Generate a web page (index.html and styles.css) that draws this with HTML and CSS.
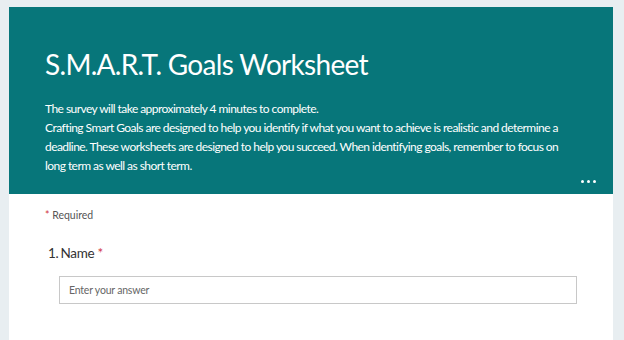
FILE: index.html
```html
<!DOCTYPE html>
<html lang="en">
<head>
    <meta charset="UTF-8" />
    <title>S.M.A.R.T. Goals Worksheet</title>
    <link rel="stylesheet" href="styles.css">
</head>
<body>

<div class="form-card">
    <div class="form-header">
        <h1>S.M.A.R.T. Goals Worksheet</h1>
        <div class="description">
            The survey will take approximately 4 minutes to complete.<br>
            Crafting Smart Goals are designed to help you identify if what you want to achieve is realistic and determine a deadline. These worksheets are designed to help you succeed. When identifying goals, remember to focus on long term as well as short term.
        </div>
        <div class="more">
            <span class="dot"></span><span class="dot"></span><span class="dot"></span>
        </div>
    </div>

    <div class="form-body">
        <div class="required-note"><span class="star">*</span> Required</div>

        <div class="question">
            <div class="question-title">1.<span class="q-name">Name</span> <span class="star">*</span></div>
            <div class="answer-box">Enter your answer</div>
        </div>
    </div>
</div>

</body>
</html>
```

FILE: styles.css
```css
body {
    margin: 0;
    padding: 7px 11px 0 9px;
    background: #e8eef1;
    font-family: 'Lato', sans-serif;
    height: 340px;
    box-sizing: border-box;
    overflow: hidden;
}

.form-card {
    background: #fff;
    height: 100%;
}

.form-header {
    background: #07767a;
    color: #fff;
    padding: 40px 36px 0 36px;
    height: 187px;
    box-sizing: border-box;
    position: relative;
}

h1 {
    margin: 0;
    font-size: 28px;
    font-weight: 400;
    line-height: 34px;
    letter-spacing: -0.7px;
}

.description {
    margin-top: 18px;
    font-size: 12px;
    line-height: 19px;
    letter-spacing: -0.55px;
    padding-right: 8px;
}

.more {
    position: absolute;
    right: 17px;
    bottom: 11px;
    display: flex;
    gap: 3px;
}

.dot {
    width: 3px;
    height: 3px;
    background: #fff;
    border-radius: 50%;
}

.form-body {
    padding: 15px 36px 0 36px;
}

.required-note {
    font-size: 10.5px;
    color: #555;
}

.star {
    color: #d1353f;
}

.question {
    margin-top: 24px;
}

.question-title {
    font-size: 13.5px;
    color: #333;
    padding-left: 3px;
    letter-spacing: -0.3px;
}

.q-name {
    margin-left: 2px;
}

.answer-box {
    margin: 15px 0 0 14px;
    width: 518px;
    height: 28px;
    box-sizing: border-box;
    border: 1px solid #c8c8c8;
    padding: 0 9px;
    font-size: 10.5px;
    line-height: 26px;
    color: #666;
    letter-spacing: -0.2px;
}
```
